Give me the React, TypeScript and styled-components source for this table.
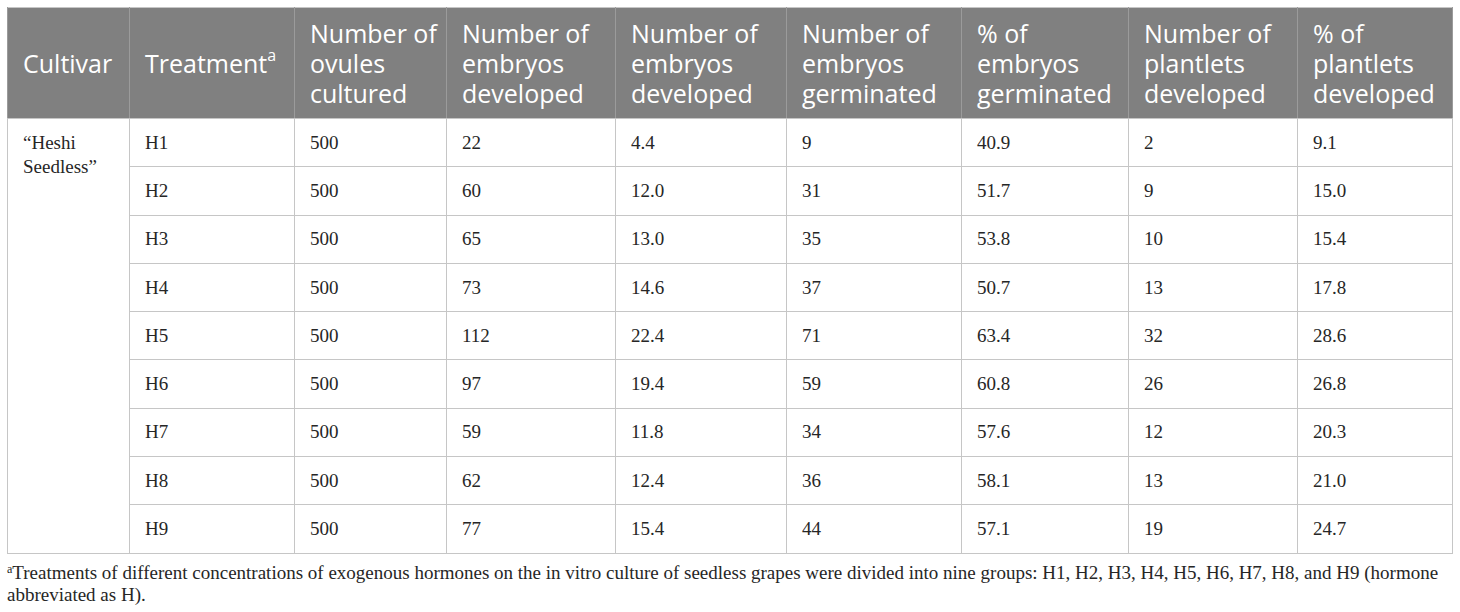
import React from 'react';
import styled, { createGlobalStyle } from 'styled-components';

const GlobalStyle = createGlobalStyle`
  html, body {
    margin: 0;
    padding: 0;
    background: #ffffff;
  }
`;

const Page = styled.div`
  padding: 7px 8px 0 7px;
  width: 1445px;
`;

const Table = styled.table`
  width: 1445px;
  table-layout: fixed;
  border-collapse: collapse;
  border: 1px solid #c6c6c6;
`;

const HeadCell = styled.th`
  height: 110px;
  padding: 0 8px 0 15px;
  background: #808080;
  color: #ffffff;
  font-family: 'Open Sans', 'Liberation Sans', sans-serif;
  font-size: 25px;
  font-weight: 400;
  line-height: 30px;
  text-align: left;
  vertical-align: middle;
  border-left: 1px solid #9b9b9b;
  border-right: 1px solid #9b9b9b;
  border-bottom: 1px solid #c6c6c6;

  sup {
    font-size: 16px;
    line-height: 0;
    position: relative;
    top: -3px;
  }
`;

const Cell = styled.td<{ $top?: boolean }>`
  height: 47.3px;
  padding: ${(p) => (p.$top ? '12px 10px 0 15px' : '0 10px 0 15px')};
  font-family: 'Liberation Serif', 'Times New Roman', serif;
  font-size: 19px;
  line-height: 24px;
  color: #262626;
  vertical-align: ${(p) => (p.$top ? 'top' : 'middle')};
  border: 1px solid #c6c6c6;
`;

const Footnote = styled.p`
  margin: 8px 0 0 0;
  font-family: 'Liberation Serif', 'Times New Roman', serif;
  font-size: 19px;
  line-height: 22px;
  color: #262626;
  width: 1452px;

  sup {
    font-size: 12px;
    vertical-align: top;
    line-height: 14px;
  }
`;

const widths = [122, 165, 152, 169, 171, 175, 167, 169, 155];

const headers: React.ReactNode[] = [
  'Cultivar',
  <>
    Treatment<sup>a</sup>
  </>,
  'Number of ovules cultured',
  'Number of embryos developed',
  'Number of embryos developed',
  'Number of embryos germinated',
  '% of embryos germinated',
  'Number of plantlets developed',
  '% of plantlets developed',
];

const rows = [
  ['H1', '500', '22', '4.4', '9', '40.9', '2', '9.1'],
  ['H2', '500', '60', '12.0', '31', '51.7', '9', '15.0'],
  ['H3', '500', '65', '13.0', '35', '53.8', '10', '15.4'],
  ['H4', '500', '73', '14.6', '37', '50.7', '13', '17.8'],
  ['H5', '500', '112', '22.4', '71', '63.4', '32', '28.6'],
  ['H6', '500', '97', '19.4', '59', '60.8', '26', '26.8'],
  ['H7', '500', '59', '11.8', '34', '57.6', '12', '20.3'],
  ['H8', '500', '62', '12.4', '36', '58.1', '13', '21.0'],
  ['H9', '500', '77', '15.4', '44', '57.1', '19', '24.7'],
];

const App: React.FC = () => {
  return (
    <>
      <GlobalStyle />
      <Page>
        <Table>
          <colgroup>
            {widths.map((w, i) => (
              <col key={i} style={{ width: w }} />
            ))}
          </colgroup>
          <thead>
            <tr>
              {headers.map((h, i) => (
                <HeadCell key={i}>{h}</HeadCell>
              ))}
            </tr>
          </thead>
          <tbody>
            {rows.map((row, r) => (
              <tr key={r}>
                {r === 0 && (
                  <Cell $top rowSpan={rows.length}>
                    “Heshi Seedless”
                  </Cell>
                )}
                {row.map((v, c) => (
                  <Cell key={c}>{v}</Cell>
                ))}
              </tr>
            ))}
          </tbody>
        </Table>
        <Footnote>
          <sup>a</sup>Treatments of different concentrations of exogenous hormones on the in vitro culture of seedless
          grapes were divided into nine groups: H1, H2, H3, H4, H5, H6, H7, H8, and H9 (hormone abbreviated as H).
        </Footnote>
      </Page>
    </>
  );
};

export default App;
